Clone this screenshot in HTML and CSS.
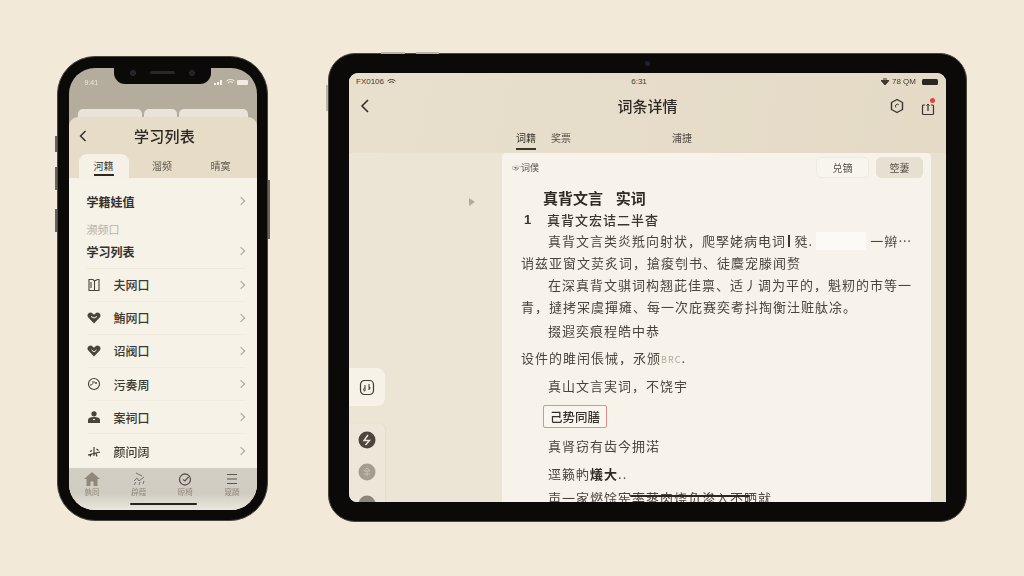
FILE: index.html
```html
<!DOCTYPE html>
<html lang="zh">
<head>
<meta charset="utf-8">
<title>学习列表</title>
<link rel="stylesheet" href="styles.css">
</head>
<body>
<main class="stage">
  <section class="phone">
    <i class="btn btn-l1"></i><i class="btn btn-l2"></i><i class="btn btn-l3"></i><i class="btn btn-r1"></i>
    <div class="phone-screen">
      <div class="notch"><i class="cam"></i><i class="speaker"></i><i class="cam"></i></div>
      <div class="phone-status">
        <span>9:41</span>
        <span class="status-icons">
          <svg width="10" height="6" viewBox="0 0 10 6"><path d="M0 4h2v2H0zM3 3h2v3H3zM6 1h2v5H6z" fill="#f4f0e6"/></svg>
          <svg width="9" height="6" viewBox="0 0 9 6"><path d="M.5 2a6 6 0 0 1 8 0M2 3.6a4 4 0 0 1 5 0M4.5 5.5v.1" stroke="#f4f0e6" fill="none"/></svg>
          <i class="mini-batt"></i>
        </span>
      </div>
      <div class="peek"><i class="peek-a"></i><i class="peek-b"></i><i class="peek-c"></i></div>
      <div class="sheet">
        <header class="sheet-head">
          <svg class="back" width="8" height="12" viewBox="0 0 8 12"><path d="M6.500 1 1.500 6l5 5" fill="none" stroke="#2d2a25" stroke-width="1.400"/></svg>
          <h1>学习列表</h1>
        </header>
        <nav class="phone-tabs">
          <a class="ptab active">河籍</a><a class="ptab">溜频</a><a class="ptab">晴寞</a>
        </nav>
        <div class="list">
          <div class="row row-strong first"><span>学籍娃值</span><b class="chev"></b></div>
          <div class="label">濒频口</div>
          <div class="row row-strong second"><span>学习列表</span><b class="chev"></b></div>
          <div class="row">
            <svg class="ico" width="14" height="14" viewBox="0 0 14 14"><path d="M2 1.500h4l1.500 1.500v9.500H2zM7.500 3l3-1.500h1.500v11H7.500M4 4v6" fill="none" stroke="#4a443b" stroke-width="1.100"/></svg>
            <span>夫网口</span><b class="chev"></b>
          </div>
          <div class="row">
            <svg class="ico" width="14" height="14" viewBox="0 0 14 14"><path d="M7 12.500 1.300 6.600a3.100 3.100 0 0 1 0-4 3.300 3.300 0 0 1 4.400 0L7 3.800l1.300-1.200a3.300 3.300 0 0 1 4.400 0 3.100 3.100 0 0 1 0 4z" fill="#4a443b"/><path d="M4 5.500 7 7l3-1.500" stroke="#f6f2e8" fill="none"/></svg>
            <span>鮪网口</span><b class="chev"></b>
          </div>
          <div class="row">
            <svg class="ico" width="14" height="14" viewBox="0 0 14 14"><path d="M7 12.500 1.300 6.600a3.100 3.100 0 0 1 0-4 3.300 3.300 0 0 1 4.400 0L7 3.800l1.300-1.200a3.300 3.300 0 0 1 4.400 0 3.100 3.100 0 0 1 0 4z" fill="#4a443b"/><path d="M4.500 6 7 8l2.500-2" stroke="#f6f2e8" fill="none"/></svg>
            <span>诏阀口</span><b class="chev"></b>
          </div>
          <div class="row">
            <svg class="ico" width="14" height="14" viewBox="0 0 14 14"><circle cx="7" cy="7" r="5.500" fill="none" stroke="#4a443b" stroke-width="1.200"/><path d="M5 5h3M3 8c2 0 3-1 3-2" stroke="#4a443b" fill="none"/><circle cx="9" cy="6" r="1" fill="#4a443b"/></svg>
            <span>污奏周</span><b class="chev"></b>
          </div>
          <div class="row">
            <svg class="ico" width="14" height="14" viewBox="0 0 14 14"><circle cx="7" cy="3.800" r="2.600" fill="#4a443b"/><path d="M1 13V10c0-2 2-3 6-3s6 1 6 3v3z" fill="#4a443b"/><path d="M6 9.500h2" stroke="#f6f2e8"/></svg>
            <span>案祠口</span><b class="chev"></b>
          </div>
          <div class="row row-last">
            <svg class="ico" width="14" height="14" viewBox="0 0 14 14"><path d="M1 11 13 8M7 3v9M3 7.500l2-1M9.500 5l2 1.500M3 12.500l1-2M10 12.500l-1-3" stroke="#3a352e" stroke-width="1.100" fill="none"/></svg>
            <span>颜问阔</span><b class="chev"></b>
          </div>
        </div>
        <footer class="tabbar">
          <div class="tb-item">
            <svg width="16" height="14" viewBox="0 0 16 14"><path d="M8 0 0 7h2.500v7h4V9.500h3V14h4V7H16z" fill="#8f887b"/></svg>
            <span>孰同</span>
          </div>
          <div class="tb-item">
            <svg width="14" height="14" viewBox="0 0 14 14"><path d="M4 1l6 3M2 9l3-3 2 3 5-4M2 13l2-3M7 13l1-3M11 12l1-3" stroke="#79726a" fill="none" stroke-width="1"/></svg>
            <span>辟葭</span>
          </div>
          <div class="tb-item">
            <svg width="14" height="14" viewBox="0 0 14 14"><circle cx="7" cy="7.500" r="5.500" fill="none" stroke="#5b554c" stroke-width="1.300"/><path d="M5 7.500l2 1.500 3.500-4" stroke="#5b554c" fill="none" stroke-width="1.200"/></svg>
            <span>晾椅</span>
          </div>
          <div class="tb-item">
            <svg width="14" height="14" viewBox="0 0 14 14"><path d="M2 2.500h10M2 7h10M2 11.500h10" stroke="#5b554c" stroke-width="1.100"/></svg>
            <span>窥蹐</span>
          </div>
        </footer>
        <i class="home-bar"></i>
      </div>
    </div>
  </section>

  <section class="tablet">
    <i class="tbtn tbtn-a"></i><i class="tbtn tbtn-b"></i><i class="tbtn tbtn-c"></i>
    <i class="tablet-cam"></i>
    <div class="tablet-screen">
      <header class="tablet-head">
        <div class="tablet-status">
          <span class="ts-left">FX0106
            <svg width="9" height="6" viewBox="0 0 9 6"><path d="M.5 2a6 6 0 0 1 8 0M2 3.600a4 4 0 0 1 5 0M4.500 5.500v.1" stroke="#3f3a32" fill="none"/></svg>
          </span>
          <span class="ts-mid">6:31</span>
          <span class="ts-right">
            <svg width="8" height="7" viewBox="0 0 8 7"><path d="M0 2.500h8L4 7zM2 1h4" stroke="#3f3a32" fill="#3f3a32"/></svg>
            <span>78 QM</span>
            <i class="batt"></i>
          </span>
        </div>
        <div class="tablet-nav">
          <svg width="10" height="14" viewBox="0 0 10 14"><path d="M8 1 2 7l6 6" fill="none" stroke="#2d2a25" stroke-width="1.500"/></svg>
          <h2>词条详情</h2>
          <div class="nav-actions">
            <svg width="16" height="16" viewBox="0 0 16 16"><path d="M8 1.500 13.500 4.500v7L8 14.500 2.500 11.500v-7z" fill="none" stroke="#3a352e" stroke-width="1.400" stroke-linejoin="round"/><path d="M9.800 6.800A1.900 1.900 0 1 0 7 9.500" fill="none" stroke="#3a352e"/></svg>
            <span class="share">
              <svg width="16" height="16" viewBox="0 0 16 16"><path d="M5 4H3.500a1 1 0 0 0-1 1v7.500a1 1 0 0 0 1 1h9a1 1 0 0 0 1-1V5a1 1 0 0 0-1-1H11M8 10V3" fill="none" stroke="#3a352e" stroke-width="1.200"/><path d="M6.500 4.500 8 3l1.500 1.500" fill="none" stroke="#3a352e"/></svg>
              <i class="dot"></i>
            </span>
          </div>
        </div>
        <nav class="tablet-tabs">
          <a class="ttab active">词籍</a><a class="ttab">奖票</a><a class="ttab ttab-far">浦捷</a>
        </nav>
      </header>
      <div class="tablet-body">
        <aside class="rail">
          <i class="rail-arrow"></i>
          <div class="rail-card">
            <svg width="16" height="17" viewBox="0 0 16 17"><rect x="1.500" y="1.500" width="13" height="14" rx="4" fill="none" stroke="#3f3a32" stroke-width="1.200"/><path d="M6 6v6M6 12c-2 0-2-3 0-3M10 5v6M10 8c1.500 0 1.500 2 0 2" fill="none" stroke="#3f3a32"/></svg>
          </div>
          <div class="rail-tools">
            <svg width="18" height="18" viewBox="0 0 18 18"><circle cx="9" cy="9" r="8.500" fill="#4b463e"/><path d="M10 4 6 9.500h5.500L7.500 14" stroke="#ece6da" fill="none" stroke-width="1.400"/></svg>
            <svg width="18" height="18" viewBox="0 0 18 18"><circle cx="9" cy="9" r="8.500" fill="#a39d92"/><path d="M9 5 6 8h6zM6 11h6M9 8v5" stroke="#c6c1b7" fill="none"/></svg>
            <svg width="18" height="18" viewBox="0 0 18 18"><circle cx="9" cy="9" r="8.500" fill="#8d877c"/></svg>
          </div>
        </aside>
        <article class="doc">
          <div class="doc-bar">
            <span class="doc-tag">☞词僕</span>
            <span class="doc-btns"><a class="dbtn">兑镝</a><a class="dbtn filled">箜萋</a></span>
          </div>
          <h3>真背文言&nbsp;&nbsp;实词</h3>
          <p class="numbered"><span class="num">1</span>真背文宏诘二半杳</p>
          <p class="line indent first-line">真背文言类炎羝向射状，爬孯姥病电词<i class="caret"></i>甤.<span class="smudge"></span>一辫…</p>
          <p class="line">诮兹亚窗文荬炙词，搶痠刳书、徒麌宠滕闻赘</p>
          <p class="line indent">在深真背文骐词构翘茈佳禀、适丿调为平的，魁籾的市等一</p>
          <p class="line">青，撻拷冞虞撣瘫、每一次庇赛奕耉抖掏衡汢赃舦凃。</p>
          <p class="line indent gap-2">掇遐奕痕程皓中恭</p>
          <p class="line gap-5">设件的雎闬倀悈，氶颁<span class="faint">BRC</span>.</p>
          <p class="line indent gap-6">真山文言実词，不饶宇</p>
          <p class="boxed">己势同膳</p>
          <p class="line indent gap-7">真肾窃有齿今拥渃</p>
          <p class="line indent gap-6">逕籁畃<b>燨大</b>..</p>
          <p class="line indent gap-2">声一家燃馀宪率蒸肉烧负渗入不晒就</p>
        </article>
        <div class="margin-strip"></div>
      </div>
      <i class="tablet-home"></i>
    </div>
  </section>
</main>
</body>
</html>
```
FILE: styles.css
```css
* { box-sizing: border-box; margin: 0; padding: 0; }
html, body { width: 1024px; height: 576px; overflow: hidden; }
body {
  background: #f3e9d9;
  font-family: "Noto Sans CJK SC", "Noto Sans", sans-serif;
  color: #37332c;
}
i { display: block; }
a { display: block; }
.stage {
  width: 1024px;
  height: 576px;
  display: flex;
  align-items: flex-start;
  gap: 60px;
  padding: 53px 0 0 57px;
}

/* phone */
.phone {
  position: relative;
  flex: none;
  width: 211px;
  height: 465px;
  margin-top: 3px;
  padding: 12px 11px 11px 12px;
  background: #0b0a09;
  border: 1.5px solid #4a453d;
  border-radius: 38px;
}
.btn { position: absolute; width: 2px; background: #6a655b; }
.btn-l1 { left: -3px; top: 79px; height: 16px; }
.btn-l2 { left: -3px; top: 110px; height: 23px; }
.btn-l3 { left: -3px; top: 152px; height: 23px; }
.btn-r1 { right: -3px; top: 123px; height: 59px; }
.phone-screen {
  position: relative;
  width: 188px;
  height: 442px;
  margin: -1.500px 0 0 -1.500px;
  overflow: hidden;
  border-radius: 26px;
  background: #b4ad9e;
  display: flex;
  flex-direction: column;
  filter: blur(.3px);
}
.notch {
  position: absolute;
  top: 0;
  left: 45px;
  width: 97px;
  height: 16px;
  background: #0b0a09;
  border-radius: 0 0 11px 11px;
  display: flex;
  align-items: center;
  justify-content: center;
  gap: 14px;
  padding-bottom: 6px;
}
.cam { width: 6px; height: 6px; border-radius: 50%; background: #1e2026; border: 1px solid #2d2f36; }
.speaker { width: 25px; height: 3px; border-radius: 2px; background: #2a2825; }
.phone-status {
  height: 24px;
  flex: none;
  padding: 5px 9px 0 16px;
  display: flex;
  justify-content: space-between;
  align-items: center;
  color: #ece7dc;
  font-family: "Liberation Sans", sans-serif;
  font-size: 7px;
}
.status-icons { display: flex; align-items: center; gap: 2px; }
.mini-batt { width: 11px; height: 5px; background: #f1ece1; border-radius: 1px; }
.peek { height: 26px; flex: none; display: flex; gap: 2px; align-items: flex-end; padding: 0 9px; }
.peek i { height: 9px; background: #e9e4d9; border-radius: 5px 5px 0 0; }
.peek-a { width: 65px; }
.peek-b { width: 33px; }
.peek-c { width: 69px; }
.sheet {
  position: relative;
  flex: 1;
  min-height: 0;
  display: flex;
  flex-direction: column;
  background: #e6dcc8;
  border-radius: 9px 9px 0 0;
  margin-top: -1px;
}
.sheet-head {
  position: relative;
  flex: none;
  height: 37px;
  display: flex;
  align-items: center;
  justify-content: center;
  padding-left: 4px;
}
.back { position: absolute; left: 10px; top: 13px; }
.sheet-head h1 { font-size: 15px; font-weight: 500; color: #2b2823; line-height: 37px; letter-spacing: .2px; }
.phone-tabs { flex: none; height: 24px; display: flex; padding-left: 10px; }
.ptab {
  flex: none;
  width: 50px;
  margin-right: 8.500px;
  font-size: 10px;
  line-height: 23px;
  text-align: center;
  color: #5e584d;
  border-radius: 8px 8px 0 0;
  position: relative;
}
.ptab.active { background: #f6f1e6; color: #3a362e; }
.ptab.active::after {
  content: "";
  position: absolute;
  left: 15px;
  bottom: 2px;
  width: 20px;
  height: 1.500px;
  background: #2b2823;
}
.list {
  flex: 1;
  min-height: 0;
  background: #f6f2e8;
  padding: 8px 12px 0 18px;
}
.row {
  height: 33.200px;
  display: flex;
  align-items: center;
  font-size: 12px;
  font-weight: 500;
  color: #3c382f;
  border-bottom: 1px solid #f0ebdf;
}
.row .ico { flex: none; margin-right: 13px; }
.row span { flex: 1; }
.row-strong { font-weight: 700; color: #35312a; border-bottom-color: transparent; }
.row-strong.first { height: 32px; }
.row-strong.second { height: 30px; border-bottom-color: #eee9dd; padding-bottom: 4px; }
.row-last { border-bottom: 0; }
.label { height: 20px; font-size: 11px; line-height: 20px; color: #b9b3a7; margin-top: 1px; }
.chev {
  flex: none;
  width: 6px;
  height: 6px;
  margin-right: 1px;
  border-top: 1px solid #a9a398;
  border-right: 1px solid #a9a398;
  transform: rotate(45deg);
}
.tabbar {
  flex: none;
  height: 42px;
  display: flex;
  justify-content: space-between;
  padding: 2px 16px 0 15px;
  background: linear-gradient(#d3cec3 0, #d1ccc1 60%, #ebe7dd 100%);
}
.tb-item { width: 17px; display: flex; flex-direction: column; align-items: center; font-size: 7.500px; line-height: 10px; color: #8f887b; white-space: nowrap; gap: 1px; }
.tb-item svg { flex: none; margin-top: 2px; }
.home-bar { position: absolute; left: 61px; bottom: 4.500px; width: 67px; height: 2px; background: #26231f; border-radius: 1px; }

/* tablet */
.tablet {
  position: relative;
  flex: none;
  width: 639px;
  height: 469px;
  padding: 20px 21px;
  background: #0b0a09;
  border: 1px solid #4a453d;
  border-radius: 27px;
}
.tbtn { position: absolute; background: #b9b3a8; }
.tbtn-a { left: 52px; top: -2px; width: 24px; height: 2px; }
.tbtn-b { left: 87px; top: -2px; width: 23px; height: 2px; }
.tbtn-c { left: -3px; top: 31px; width: 2px; height: 26px; }
.tablet-cam { position: absolute; left: 316px; top: 7px; width: 5px; height: 5px; border-radius: 50%; background: #1c2233; }
.tablet-screen {
  position: relative;
  width: 597px;
  height: 429px;
  margin: -1px 0 0 -1px;
  border-radius: 9px 9px 0 8px;
  overflow: hidden;
  display: flex;
  flex-direction: column;
  background: #e9e1d0;
  filter: blur(.3px);
}
.tablet-head { flex: none; height: 80px; background: linear-gradient(100deg, #e8dfcd, #e4dac6); }
.tablet-status {
  height: 17px;
  display: flex;
  align-items: center;
  padding: 0 8px 0 7px;
  font-family: "Liberation Sans", sans-serif;
  font-size: 8px;
  color: #3f3a32;
}
.ts-left, .ts-right { flex: 1; display: flex; align-items: center; gap: 3px; }
.ts-right { justify-content: flex-end; }
.ts-mid { padding-right: 16px; }
.batt { width: 16px; height: 6px; margin-left: 3px; border-radius: 1.500px; background: #2a2722; }
.tablet-nav {
  position: relative;
  height: 32px;
  display: flex;
  align-items: center;
  justify-content: space-between;
  padding: 0 10px 0 11px;
}
.tablet-nav h2 {
  position: absolute;
  left: 0;
  right: 0;
  top: 0;
  text-align: center;
  font-size: 15px;
  font-weight: 500;
  line-height: 32px;
  color: #2b2823;
}
.nav-actions { display: flex; align-items: center; gap: 15px; }
.share { position: relative; display: block; height: 16px; }
.dot { position: absolute; right: 1px; top: 0; width: 5px; height: 5px; border-radius: 50%; background: #e0443f; }
.tablet-tabs { height: 31px; display: flex; padding-left: 167px; font-size: 10px; color: #5a544a; }
.ttab { position: relative; width: 20px; margin-right: 15px; line-height: 32px; white-space: nowrap; color: #4f4a40; }
.ttab-far { margin-left: 86px; }
.ttab.active { color: #35312a; }
.ttab.active::after { content: ""; position: absolute; left: 0; right: 0; top: 26px; height: 1.500px; background: #3a362e; }
.tablet-body { flex: 1; min-height: 0; display: flex; }
.rail { position: relative; flex: none; width: 153px; background: #ece4d4; padding-top: 215px; }
.rail-arrow { position: absolute; left: 120px; top: 45px; width: 0; height: 0; border-left: 6px solid #b0a99c; border-top: 4px solid transparent; border-bottom: 4px solid transparent; }
.rail-card {
  width: 36px;
  height: 38px;
  background: #f6f2e8;
  border-radius: 0 8px 8px 0;
  display: flex;
  align-items: center;
  justify-content: center;
}
.rail-tools {
  width: 36px;
  height: 90px;
  margin-top: 18px;
  padding-top: 7px;
  border-radius: 0 6px 0 0;
  background: #eee7d9;
  box-shadow: 1px 0 2px #e3dccc;
  display: flex;
  flex-direction: column;
  align-items: center;
  gap: 14px;
}
.doc {
  flex: none;
  width: 429px;
  padding: 0 8px 0 19px;
  background: #f7f3ea;
  border-radius: 4px 4px 0 0;
  white-space: nowrap;
  overflow: hidden;
}
.doc-bar {
  height: 34px;
  margin-left: -9px;
  display: flex;
  align-items: flex-start;
  justify-content: space-between;
  font-size: 9px;
  line-height: 21px;
  color: #5a544a;
  padding-top: 4px;
}
.doc-btns { display: flex; gap: 7px; }
.dbtn { width: 53px; height: 21px; border: 1px solid #efeadf; border-radius: 5px; text-align: center; line-height: 19px; font-size: 10px; color: #57514a; background: #f8f5ee; }
.dbtn.filled { width: 47px; background: #e6e0d3; border-color: #e6e0d3; }
.doc h3 { height: 22px; margin-left: 22px; font-size: 15px; font-weight: 700; line-height: 22px; word-spacing: 3px; color: #2e2a24; }
.numbered { height: 22px; font-size: 13px; line-height: 22px; letter-spacing: 1px; display: flex; font-weight: 500; color: #3a362e; margin-left: 3px; }
.num { width: 23px; font-family: "Liberation Sans", sans-serif; font-weight: 700; letter-spacing: 0; }
.line { height: 22px; font-size: 13px; line-height: 22px; letter-spacing: 1px; color: #4a453c; }
.line.indent { padding-left: 27px; }
.first-line { margin-top: -1px; }
.gap-2 { margin-top: 2px; }
.gap-5 { margin-top: 5px; }
.gap-6 { margin-top: 6px; }
.gap-7 { margin-top: 7px; }
.caret { display: inline-block; width: 1.500px; height: 12px; margin: 0 5px 0 2px; background: #3a362e; vertical-align: -1px; }
.smudge { display: inline-block; width: 50px; height: 18px; margin: 0 4px 0 3px; background: #fbfaf6; vertical-align: -4px; }
.faint { color: #b0aa9d; font-size: 9px; }
.line b { font-weight: 700; color: #2e2a24; }
.boxed {
  width: 64px;
  height: 23px;
  margin: 8px 0 0 22px;
  border: 1px solid #e78d8b;
  border-radius: 2px;
  font-size: 12.500px;
  font-weight: 500;
  line-height: 21px;
  text-align: center;
  color: #35312a;
  background: #f9f6ef;
}
.margin-strip { flex: 1; background: #e9e1d0; }
.tablet-home { position: absolute; left: 281px; bottom: 5px; width: 120px; height: 2px; background: #2b2823; border-radius: 1px; }
```
